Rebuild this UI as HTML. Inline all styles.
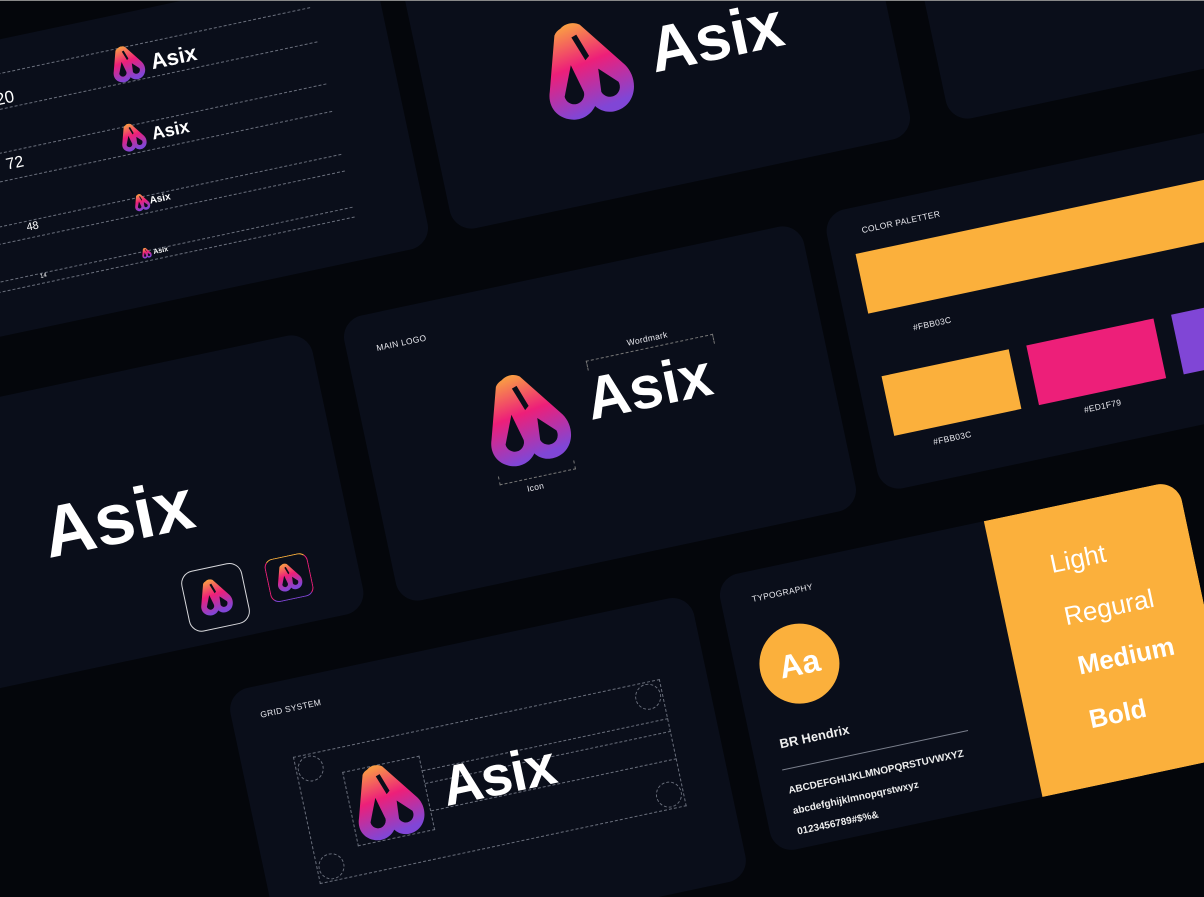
<!DOCTYPE html>
<html><head><meta charset="utf-8"><style>
*{margin:0;padding:0;box-sizing:border-box}
html{width:1204px;height:897px;overflow:hidden}
body{width:1204px;height:897px;background:#04060b;overflow:hidden;position:relative;font-family:"Liberation Sans",sans-serif;color:#fff}
#wrap{position:absolute;left:0;top:0;width:1204px;height:897px;overflow:hidden}
.card{position:absolute;background:#0a0e1a;border-radius:22px;transform:rotate(-12deg);overflow:hidden}
.a{position:absolute;white-space:nowrap;line-height:1}
.lg{position:absolute}
.lbl{font-size:8.5px;letter-spacing:.3px;color:#e8e8ee}
.dl{position:absolute;left:0;width:400px;border-top:1px dashed #6a6f7c}
.b{font-weight:bold}
</style></head><body>
<svg width="0" height="0" style="position:absolute">
<defs>
<linearGradient id="g" x1="0" y1="0" x2="0.15" y2="1">
<stop offset="0" stop-color="#FBB03C"/><stop offset="0.5" stop-color="#ED1F79"/><stop offset="1" stop-color="#8046D6"/>
</linearGradient>
<symbol id="L" viewBox="0 0 100 110">
<path fill="url(#g)" d="M30 4 C36 -1 46 -1 52 4 L92 58 C104 76 96 104 72 106 C62 107 54 102 50 96 C44 104 34 108 24 106 C6 102 -2 86 4 70 L22 10 C24 7 27 5 30 4 Z"/>
<path fill="#0a0e1a" d="M33 46 L41 78 A11 11 0 1 1 19 79 Z"/>
<path fill="#0a0e1a" d="M62 56 L81 75 A11 11 0 1 1 60 82 Z"/>
<path fill="#0a0e1a" d="M40 16 L46 14 L55 40 L50 44 Z"/>
</symbol>
</defs></svg>
<div id="wrap">
<!-- sizes card -->
<div class="card" style="left:-63px;top:6px;width:470px;height:291px">
<div class="dl" style="top:33px"></div><div class="dl" style="top:68px"></div>
<div class="dl" style="top:111px"></div><div class="dl" style="top:139px"></div>
<div class="dl" style="top:183px"></div><div class="dl" style="top:200px"></div>
<div class="dl" style="top:237px"></div><div class="dl" style="top:247px"></div>
<div class="a" style="left:32px;width:60px;text-align:right;top:50px;font-size:17px">120</div>
<div class="a" style="left:70px;top:117px;font-size:16px">72</div>
<div class="a" style="left:77px;top:185px;font-size:11px">48</div>
<div class="a" style="left:80px;top:238px;font-size:6px">14</div>
<svg class="lg" style="left:193px;top:32px" width="34" height="37"><use href="#L"/></svg>
<div class="a b" style="left:233px;top:43px;font-size:22px">Asix</div>
<svg class="lg" style="left:187px;top:109px" width="26" height="29"><use href="#L"/></svg>
<div class="a b" style="left:219px;top:115px;font-size:18px">Asix</div>
<svg class="lg" style="left:187px;top:180px" width="16" height="18"><use href="#L"/></svg>
<div class="a b" style="left:203px;top:185px;font-size:10px">Asix</div>
<svg class="lg" style="left:184px;top:234px" width="10" height="11"><use href="#L"/></svg>
<div class="a b" style="left:196px;top:237px;font-size:7px">Asix</div>
</div>

<!-- top middle -->
<div class="card" style="left:419px;top:-104px;width:470px;height:291px">
<svg class="lg" style="left:119px;top:110px" width="90" height="99"><use href="#L"/></svg>
<div class="a b" style="left:229px;top:122px;font-size:64px">Asix</div>
</div>

<!-- top right -->
<div class="card" style="left:915px;top:-214px;width:470px;height:291px"></div>

<!-- palette -->
<div class="card" style="left:847px;top:162px;width:470px;height:285px">
<div class="a lbl" style="left:35px;top:20px">COLOR PALETTER</div>
<div style="position:absolute;left:24px;top:46px;width:430px;height:61px;background:#FBB03C"></div>
<div class="a lbl" style="left:65px;top:126px">#FBB03C</div>
<div style="position:absolute;left:24px;top:171px;width:130px;height:61px;background:#FBB03C"></div>
<div style="position:absolute;left:172px;top:171px;width:130px;height:61px;background:#ED1F79"></div>
<div style="position:absolute;left:320px;top:171px;width:130px;height:61px;background:#8046D6"></div>
<div class="a lbl" style="left:61px;top:242px">#FBB03C</div>
<div class="a lbl" style="left:215px;top:242px">#ED1F79</div>
<div class="a lbl" style="left:364px;top:242px">#8046D6</div>
</div>

<!-- left mid -->
<div class="card" style="left:-127px;top:377px;width:470px;height:285px">
<div class="a b" style="left:169px;top:108px;font-size:72px">Asix</div>
<div style="position:absolute;left:293px;top:210px;width:62px;height:62px;border:1.3px solid #d8d8dc;border-radius:13px"></div>
<svg class="lg" style="left:307px;top:222px" width="34" height="37"><use href="#L"/></svg>
<div style="position:absolute;left:378px;top:215px;width:44px;height:44px;border:1.3px solid #ED1F79;border-top-color:#FBB03C;border-bottom-color:#8046D6;border-radius:9px"></div>
<svg class="lg" style="left:387px;top:222px" width="26" height="29"><use href="#L"/></svg>
</div>

<!-- main -->
<div class="card" style="left:365px;top:268px;width:470px;height:291px">
<div class="a lbl" style="left:30px;top:31px">MAIN LOGO</div>
<div class="a lbl" style="left:276px;top:78px">Wordmark</div>
<div style="position:absolute;left:232px;top:91px;width:130px;height:10px;border:1px dashed #777;border-bottom:none"></div>
<svg class="lg" style="left:120px;top:89px" width="85" height="94"><use href="#L"/></svg>
<div class="a b" style="left:225px;top:100px;font-size:60px">Asix</div>
<div style="position:absolute;left:122px;top:186px;width:78px;height:9px;border:1px dashed #777;border-top:none"></div>
<div class="a lbl" style="left:148px;top:200px">Icon</div>
</div>

<!-- grid -->
<div class="card" style="left:251px;top:640px;width:474px;height:290px">
<div class="a lbl" style="left:29px;top:25px">GRID SYSTEM</div>
<div style="position:absolute;left:52px;top:77px;width:375px;height:130px;border:1px dashed #6a6f7c"></div>
<div style="position:absolute;left:54px;top:79px;width:26px;height:26px;border:1px dashed #6a6f7c;border-radius:50%"></div>
<div style="position:absolute;left:399px;top:79px;width:26px;height:26px;border:1px dashed #6a6f7c;border-radius:50%"></div>
<div style="position:absolute;left:54px;top:179px;width:26px;height:26px;border:1px dashed #6a6f7c;border-radius:50%"></div>
<div style="position:absolute;left:399px;top:179px;width:26px;height:26px;border:1px dashed #6a6f7c;border-radius:50%"></div>
<div style="position:absolute;left:97px;top:102px;width:79px;height:76px;border:1px dashed #6a6f7c"></div>
<div style="position:absolute;left:176px;top:117px;width:251px;border-top:1px dashed #6a6f7c"></div>
<div style="position:absolute;left:176px;top:130px;width:251px;border-top:1px dashed #6a6f7c"></div>
<div style="position:absolute;left:176px;top:158px;width:251px;border-top:1px dashed #6a6f7c"></div>
<svg class="lg" style="left:101px;top:102px" width="70" height="77"><use href="#L"/></svg>
<div class="a b" style="left:192px;top:110px;font-size:56px;letter-spacing:-1px">Asix</div>
</div>

<!-- typography -->
<div class="card" style="left:740px;top:526px;width:472px;height:282px">
<div class="a lbl" style="left:31px;top:24px">TYPOGRAPHY</div>
<div style="position:absolute;left:24px;top:61px;width:80px;height:80px;border-radius:50%;background:#FBB03C;font-weight:bold;font-size:32px;line-height:80px;text-align:center">Aa</div>
<div class="a" style="left:28px;top:169px;font-size:13px;font-weight:bold;color:#eee">BR Hendrix</div>
<div style="position:absolute;left:25px;top:201px;width:190px;border-top:1px solid #7a7f8c"></div>
<div class="a" style="left:27px;top:219px;font-size:10px;color:#eee;font-weight:bold">ABCDEFGHIJKLMNOPQRSTUVWXYZ</div>
<div class="a" style="left:27px;top:240px;font-size:10px;color:#eee;font-weight:bold">abcdefghijklmnopqrstwxyz</div>
<div class="a" style="left:27px;top:261px;font-size:10px;color:#eee;font-weight:bold">0123456789#$%&amp;</div>
<div style="position:absolute;left:274px;top:0;width:198px;height:282px;background:#FBB03C"></div>
<div class="a" style="left:330px;top:43px;font-size:26px;font-weight:300">Light</div>
<div class="a" style="left:333px;top:97px;font-size:26px">Regural</div>
<div class="a" style="left:336px;top:148px;font-size:26px;font-weight:bold">Medium</div>
<div class="a" style="left:336px;top:203px;font-size:26px;font-weight:bold">Bold</div>
</div>
<div style="position:absolute;left:0;top:0;width:1204px;height:1px;background:#888"></div>
</div>
</body></html>
